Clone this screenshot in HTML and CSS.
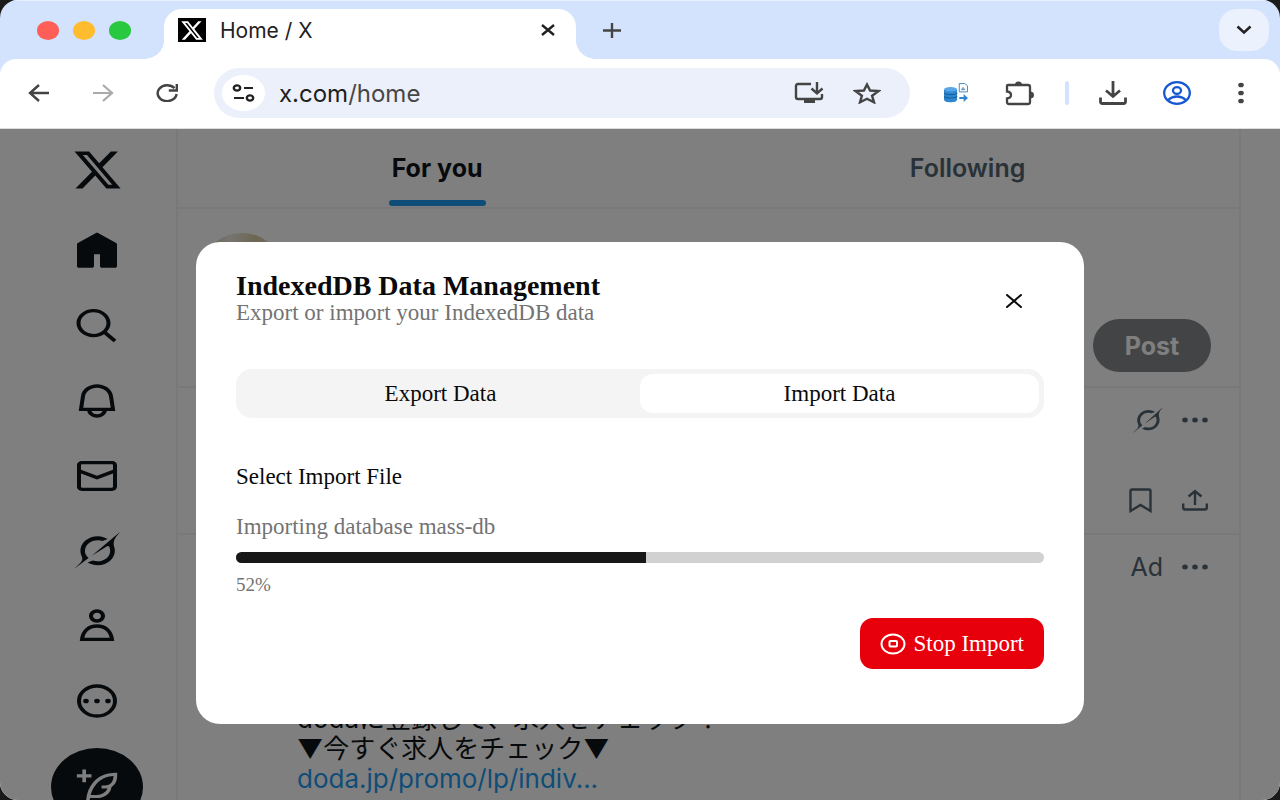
FILE: index.html
```html
<!DOCTYPE html>
<html lang="en">
<head>
<meta charset="utf-8">
<title>Home / X</title>
<link rel="stylesheet" href="styles.css">
</head>
<body>
<svg class="defs" aria-hidden="true">
  <symbol id="x-logo" viewBox="1 2 22 20" preserveAspectRatio="none"><path d="M18.244 2.25h3.308l-7.227 8.26 8.502 11.24H16.17l-5.214-6.817L4.99 21.75H1.68l7.73-8.835L1.254 2.25H8.08l4.713 6.231zm-1.161 17.52h1.833L7.084 4.126H5.117z"/></symbol>
  <symbol id="grok" viewBox="0 0 33 32" preserveAspectRatio="none"><path d="M12.745 20.54l10.97-8.19c.539-.4 1.307-.244 1.564.38 1.349 3.288.746 7.241-1.938 9.955-2.683 2.714-6.417 3.31-9.83 1.954l-3.728 1.745c5.347 3.697 11.84 2.782 15.898-1.324 3.219-3.255 4.216-7.692 3.284-11.693l.008.009c-1.351-5.878.332-8.227 3.782-13.031L33 0l-4.54 4.59v-.014L12.743 20.544m-2.263 1.987c-3.837-3.707-3.175-9.446.1-12.755 2.42-2.449 6.388-3.448 9.852-1.979l3.72-1.737c-.67-.49-1.53-1.017-2.515-1.387-4.455-1.854-9.789-.931-13.41 2.728-3.483 3.523-4.579 8.94-2.697 13.561 1.405 3.454-.899 5.898-3.22 8.364C1.49 30.2.666 31.074 0 32l10.478-9.466"/></symbol>
  <symbol id="dots" viewBox="0 0 26 6" preserveAspectRatio="none"><ellipse cx="3" cy="3" rx="2.8" ry="2.5"/><ellipse cx="13" cy="3" rx="2.8" ry="2.5"/><ellipse cx="23" cy="3" rx="2.8" ry="2.5"/></symbol>
</svg>
<div class="window">
  <header class="tabstrip">
    <div class="lights"><span class="light red"></span><span class="light yellow"></span><span class="light green"></span></div>
    <div class="tab">
      <span class="favicon"><svg width="22" height="19" fill="#fff"><use href="#x-logo"/></svg></span>
      <span class="tab-title">Home / X</span>
      <button class="plain" aria-label="Close tab"><svg width="14" height="12" viewBox="0 0 14 12" class="line dark"><path d="M1 1l12 10M13 1L1 11" stroke-width="2.4"/></svg></button>
    </div>
    <button class="plain new-tab" aria-label="New tab"><svg width="18" height="15" viewBox="0 0 18 15" class="line"><path d="M0 7.5h18M9 0v15" stroke-width="2.4"/></svg></button>
    <button class="plain tab-search" aria-label="Search tabs"><svg width="16" height="10" viewBox="0 0 16 10" class="line dark"><path d="M1.5 1.5L8 7.500l6.500-6" stroke-width="2.500"/></svg></button>
  </header>

  <nav class="toolbar" aria-label="Browser">
    <button class="plain tool" aria-label="Back"><svg width="22" height="18" viewBox="0 0 22 18" class="line"><path d="M11 1L2 9l9 8M2 9h19" stroke-width="2.4"/></svg></button>
    <button class="plain tool off" aria-label="Forward" disabled><svg width="22" height="18" viewBox="0 0 22 18" class="line"><path d="M11 1l9 8-9 8M20 9H1" stroke-width="2.2"/></svg></button>
    <button class="plain tool" aria-label="Reload"><svg width="22" height="18" viewBox="0 0 22 18" class="line"><path d="M20.600 10A9.500 7.900 0 1 1 18.500 4.200M20.800 0v6.500h-8" stroke-width="2.4"/></svg></button>
    <div class="omnibox">
      <button class="plain site-info" aria-label="Site information"><svg width="23" height="18" viewBox="0 0 23 18" class="line dark"><ellipse cx="5" cy="4" rx="3.200" ry="2.600" stroke-width="2.400"/><path d="M12 4h9M2 14h10" stroke-width="2.200"/><ellipse cx="18" cy="14" rx="3.200" ry="2.600" stroke-width="2.400"/></svg></button>
      <span class="url">x.com<span class="path">/home</span></span>
      <button class="plain" aria-label="Install X"><svg width="30" height="22" viewBox="0 0 30 22" class="line"><path d="M17 2H4Q2 2 2 4v11q0 2 2 2h22q2 0 2-2v-3" stroke-width="2.400"/><path d="M10 18h11v3H10z" fill="#444" stroke="none"/><path d="M23 0v11M17.500 6.500L23 11.500l5.500-5" stroke-width="2.400"/></svg></button>
      <button class="plain star" aria-label="Bookmark this tab"><svg width="28" height="22" viewBox="0 0 28 22" class="line"><path d="M14 2.500l3.100 6 8.300.6-6.300 4.600 1.900 6.600-7-3.500-7 3.500 1.900-6.600L2.600 9.100l8.300-.6z" stroke-width="2.400"/></svg></button>
    </div>
    <button class="plain tool" aria-label="IndexedDB extension"><svg width="24" height="20" viewBox="0 0 22 18" preserveAspectRatio="none"><path d="M0 6v9c0 3 12 3 12 0V6z" fill="#2f86cf"/><ellipse cx="6" cy="5.700" rx="6" ry="2" fill="#58a6e6"/><path d="M0 9c1 2 11 2 12 0M0 12c1 2 11 2 12 0" fill="none" stroke="#17609f"/><path d="M14 12.500h4v-2.500l4 3.500-4 3.500V14.500h-4z" fill="#2f86cf"/><path d="M14 .5h5l2.500 2v5.500H14zM16 6l1.500-2 1.500 2z" fill="#fff" stroke="#4b8bc0" stroke-width=".9"/></svg></button>
    <button class="plain tool" aria-label="Extensions"><svg width="30" height="25" viewBox="0 0 30 25" class="line"><path d="M3 4h20q2 0 2 2v15q0 2-2 2H4q-2 0-2-2v-3.500q4-.500 4-3.500t-4-3.500V5q0-1 1-1z" stroke-width="2.300"/><path d="M10 4q0-3.500 3.500-3.500T17 4zM25 10.500q4 0 4 3.500t-4 3.500z" fill="#444" stroke="none"/></svg></button>
    <span class="divider"></span>
    <button class="plain tool" aria-label="Downloads"><svg width="28" height="24" viewBox="0 0 28 24" class="line"><path d="M14 0v15M7 9.500l7 6 7-6" stroke-width="2.800"/><path d="M1.500 16.500v4q0 2 2 2h21q2 0 2-2v-4" stroke-width="2.800"/></svg></button>
    <button class="plain tool" aria-label="Profile"><svg width="28" height="24" viewBox="0 0 28 24" fill="none" stroke="#1558d0" stroke-width="2.300"><ellipse cx="14" cy="12" rx="12.800" ry="10.800"/><ellipse cx="14" cy="9.500" rx="4" ry="3.400"/><path d="M5 19q4-3.500 9-3.500t9 3.500"/></svg></button>
    <button class="plain tool" aria-label="Menu"><svg width="6" height="22" viewBox="0 0 6 22" fill="#444"><ellipse cx="3" cy="3" rx="2.800" ry="2.300"/><ellipse cx="3" cy="11" rx="2.800" ry="2.300"/><ellipse cx="3" cy="19" rx="2.800" ry="2.300"/></svg></button>
  </nav>

  <div class="page">
    <nav class="sidebar" aria-label="Primary">
      <a href="#" class="brand" aria-label="X"><svg width="47" height="38"><use href="#x-logo"/></svg></a>
      <a href="#" aria-label="Home"><svg class="nav-icon" viewBox="0 0 24 24" preserveAspectRatio="none"><path d="M21.591 7.146L12.520 1.157c-.316-.21-.724-.21-1.040 0l-9.071 5.990c-.26.173-.409.456-.409.757v13.183c0 .502.418.913.929.913h6.638c.511 0 .929-.41.929-.913v-7.075h3.008v7.075c0 .502.418.913.929.913h6.639c.510 0 .928-.41.928-.913V7.904c0-.301-.158-.584-.408-.758z"/></svg></a>
      <a href="#" aria-label="Search"><svg class="nav-icon" viewBox="0 0 24 24" preserveAspectRatio="none"><path d="M10.250 3.750c-3.590 0-6.500 2.910-6.500 6.500s2.910 6.500 6.500 6.500c1.795 0 3.419-.726 4.596-1.904 1.178-1.177 1.904-2.801 1.904-4.596 0-3.590-2.910-6.500-6.500-6.500zm-8.500 6.500c0-4.694 3.806-8.500 8.500-8.500s8.500 3.806 8.500 8.500c0 1.986-.682 3.815-1.824 5.262l4.781 4.781-1.414 1.414-4.781-4.781c-1.447 1.142-3.276 1.824-5.262 1.824-4.694 0-8.500-3.806-8.500-8.500z"/></svg></a>
      <a href="#" aria-label="Notifications"><svg class="nav-icon" viewBox="0 0 24 24" preserveAspectRatio="none"><path d="M19.993 9.042C19.480 5.017 16.054 2 11.996 2s-7.490 3.021-7.999 7.051L2.866 18H7.100c.463 2.282 2.481 4 4.900 4s4.437-1.718 4.900-4h4.236l-1.143-8.958zM12 20c-1.306 0-2.417-.835-2.829-2h5.658c-.412 1.165-1.523 2-2.829 2zm-6.866-4l.847-6.698C6.364 6.272 8.941 4 11.996 4s5.627 2.268 6.013 5.295L18.864 16H5.134z"/></svg></a>
      <a href="#" aria-label="Messages"><svg class="nav-icon" viewBox="0 0 24 24" preserveAspectRatio="none"><path d="M1.998 5.500c0-1.381 1.119-2.500 2.500-2.500h15c1.381 0 2.500 1.119 2.500 2.500v13c0 1.381-1.119 2.500-2.500 2.500h-15c-1.381 0-2.500-1.119-2.500-2.500v-13zm2.500-.5c-.276 0-.5.224-.5.5v2.764l8 3.638 8-3.636V5.500c0-.276-.224-.5-.5-.5h-15zm15.500 5.463l-8 3.636-8-3.638V18.500c0 .276.224.5.5.5h15c.276 0 .5-.224.5-.5v-8.037z"/></svg></a>
      <a href="#" aria-label="Grok"><svg width="46" height="37"><use href="#grok"/></svg></a>
      <a href="#" aria-label="Profile page"><svg class="nav-icon" viewBox="0 0 24 24" preserveAspectRatio="none"><path d="M5.651 19h12.698c-.337-1.800-1.023-3.210-1.945-4.190C15.318 13.650 13.838 13 12 13s-3.317.650-4.404 1.810c-.922.980-1.608 2.390-1.945 4.190zm.486-5.560C7.627 11.850 9.648 11 12 11s4.373.850 5.863 2.440c1.477 1.580 2.366 3.800 2.632 6.460l.11 1.100H3.395l.11-1.100c.266-2.660 1.155-4.880 2.632-6.460zM12 4c-1.105 0-2 .9-2 2s.895 2 2 2 2-.9 2-2-.895-2-2-2zM8 6c0-2.210 1.791-4 4-4s4 1.790 4 4-1.791 4-4 4-4-1.790-4-4z"/></svg></a>
      <a href="#" aria-label="More"><svg class="nav-icon" viewBox="0 0 24 24" preserveAspectRatio="none"><circle cx="12" cy="12" r="9" fill="none" stroke="#0f1419" stroke-width="2"/><circle cx="6.500" cy="12" r="1.400"/><circle cx="12" cy="12" r="1.400"/><circle cx="17.500" cy="12" r="1.400"/></svg></a>
      <button class="plain compose" aria-label="Compose post"><svg width="44" height="38" viewBox="0 0 24 24" preserveAspectRatio="none" fill="#fff"><path d="M23 3c-6.620-.1-10.380 2.421-13.050 6.030C7.290 12.610 6 17.331 6 22h2c0-1.007.070-2.012.190-3H12c4.100 0 7.480-3.082 7.940-7.054C22.790 10.147 23.170 6.359 23 3zm-7 8h-1.500v2H16c.630-.016 1.200-.08 1.720-.188C16.950 15.240 14.680 17 12 17H8.550c.570-2.512 1.570-4.851 3-6.780 2.160-2.912 5.290-4.911 9.450-5.187C20.950 8.079 19.900 11 16 11zM4 9V6H1V4h3V1h2v3h3v2H6v3H4z"/></svg></button>
    </nav>

    <main class="feed">
      <div class="feed-tabs">
        <a href="#" class="feed-tab current"><span>For you</span></a>
        <a href="#" class="feed-tab"><span>Following</span></a>
      </div>
      <section class="composer">
        <span class="avatar"></span>
        <button class="plain post">Post</button>
      </section>
      <article class="item first">
        <div class="row"><svg width="30" height="26"><use href="#grok"/></svg><svg width="26" height="6"><use href="#dots"/></svg></div>
        <div class="row">
          <svg class="bookmark" width="23" height="25" viewBox="0 0 23 25"><path d="M1.500 23V3q0-1.500 1.500-1.500h17q1.500 0 1.500 1.500v20l-10-6z" fill="none" stroke="#536471" stroke-width="2.400"/></svg>
          <svg width="26" height="22" viewBox="0 0 26 22"><path d="M13 16V2M6.500 7.500L13 2l6.500 5.500M1.200 14.500v4q0 2 2 2h19.600q2 0 2-2v-4" fill="none" stroke="#536471" stroke-width="2.400"/></svg>
        </div>
      </article>
      <article class="item ad">
        <div class="row"><span>Ad</span><svg width="26" height="6"><use href="#dots"/></svg></div>
        <p class="ad-text">dodaに登録して、求人をチェック！<br>▼今すぐ求人をチェック▼<br><a href="#">doda.jp/promo/lp/indiv...</a></p>
      </article>
    </main>

    <div class="overlay">
      <section class="dialog" role="dialog" aria-modal="true" aria-labelledby="dialog-title">
        <header class="dialog-head">
          <div>
            <h1 id="dialog-title">IndexedDB Data Management</h1>
            <p class="muted">Export or import your IndexedDB data</p>
          </div>
          <button class="plain close" aria-label="Close dialog"><svg width="16" height="14" viewBox="0 0 16 14" class="line black"><path d="M1 1l14 12M15 1L1 13" stroke-width="2" stroke-linecap="round"/></svg></button>
        </header>
        <div class="segments" role="tablist">
          <button class="plain segment" role="tab" aria-selected="false">Export Data</button>
          <button class="plain segment active" role="tab" aria-selected="true">Import Data</button>
        </div>
        <h2>Select Import File</h2>
        <p class="muted" id="status">Importing database mass-db</p>
        <div class="progress" role="progressbar" aria-labelledby="status" aria-valuenow="52" aria-valuemin="0" aria-valuemax="100"><div class="bar" style="width:50.8%"></div></div>
        <p class="percent">52%</p>
        <div class="actions">
          <button class="plain stop"><svg width="26" height="22" viewBox="0 0 26 22" fill="none" stroke="#fff" stroke-width="2"><ellipse cx="13" cy="11" rx="11.500" ry="9.500"/><rect x="9.500" y="8" width="7.500" height="5.500" rx="1"/></svg>Stop Import</button>
        </div>
      </section>
    </div>
  </div>
</div>
</body>
</html>
```
FILE: styles.css
```css
* { box-sizing: border-box; }
html, body { margin: 0; height: 100%; }
body { background: #1a1a1a; overflow: hidden; font-family: Inter, "Noto Sans CJK JP", sans-serif; }
h1, h2, p { margin: 0; }
svg { display: block; flex: none; }
.defs { position: absolute; width: 0; height: 0; }
.plain { border: 0; padding: 0; background: none; font: inherit; color: inherit; cursor: pointer; display: flex; align-items: center; justify-content: center; }
.line { fill: none; stroke: #444; }
.dark { stroke: #222; }
.black { stroke: #0a0a0a; }

.window { height: 100vh; display: flex; flex-direction: column; overflow: hidden; border-radius: 18px; background: #d3e3fd; }

/* Tab strip */
.tabstrip { display: flex; height: 59px; flex: none; padding-right: 11px; border-top: 1px solid #e6effd; }
.lights { display: flex; gap: 14px; align-items: center; padding-left: 37px; width: 164px; }
.light { width: 22px; height: 19px; border-radius: 50%; }
.red { background: #ff5f57; }
.yellow { background: #febc2e; }
.green { background: #28c840; }
.tab { position: relative; display: flex; align-items: center; width: 412px; margin-top: 8px; padding: 0 21px 8px 14px; background: #fff; border-radius: 18px 18px 0 0; }
.tab::before, .tab::after { content: ""; position: absolute; bottom: 0; width: 20px; height: 18px; }
.tab::before { right: 100%; background: radial-gradient(ellipse 20px 18px at 0 0, #d3e3fd 98%, #fff); }
.tab::after { left: 100%; background: radial-gradient(ellipse 20px 18px at 100% 0, #d3e3fd 98%, #fff); }
.favicon { display: flex; align-items: center; justify-content: center; width: 28px; height: 24px; background: #000; }
.tab-title { flex: 1; margin-left: 14px; font-size: 21px; color: #222; }
.new-tab { width: 72px; }
.tab-search { width: 50px; height: 42px; margin: 8px 0 0 auto; border-radius: 18px; background: #ebf1fd; }

/* Toolbar */
.toolbar { display: flex; align-items: center; flex: none; height: 69px; padding: 0 7px 1px; background: #fff; border-radius: 16px 16px 0 0; }
.tool { width: 64px; height: 48px; }
.off { opacity: .45; }
.omnibox { flex: 1; display: flex; align-items: center; height: 50px; margin: 0 14px 0 15px; padding: 0 29px 0 8px; border-radius: 25px; background: #ebf0fa; }
.site-info { width: 43px; height: 36px; border-radius: 50%; background: #fff; }
.url { flex: 1; margin-left: 14px; font-size: 24px; color: #1f1f1f; }
.path { color: #474747; }
.star { margin-left: 29px; }
.divider { width: 4px; height: 24px; margin: 0 12px 0 13px; border-radius: 2px; background: #d3e3fd; }

/* Page */
.page { position: relative; flex: 1; min-height: 0; display: flex; overflow: hidden; background: #fff; border-top: 1px solid #ddd; color: #0f1419; }
.sidebar { width: 176px; flex: none; display: flex; flex-direction: column; align-items: center; padding: 3px 0 0 18px; }
.sidebar a { flex: none; height: 75px; display: flex; align-items: center; fill: #0f1419; }
.sidebar .brand { height: 81px; padding-bottom: 6px; }
.nav-icon { width: 48px; height: 40px; }
.compose { flex: none; width: 92px; height: 78px; margin-top: 10px; border-radius: 50%; background: #0f1419; }
.feed { flex: 1; margin-right: 39px; border: solid #eff3f4; border-width: 0 2px; }
.feed-tabs { display: flex; height: 80px; border-bottom: 2px solid #eff3f4; }
.feed-tab { flex: 1 1 auto; display: flex; justify-content: center; color: #536471; font-size: 25px; line-height: 30px; font-weight: 600; text-decoration: none; }
.feed-tab span { display: flex; flex-direction: column; justify-content: space-between; padding: 24px 0 1px; }
.current { color: #0f1419; font-weight: 700; }
.current span::after { content: ""; height: 6px; margin: 0 -3px; border-radius: 3px; background: #1d9bf0; }
.composer { display: flex; justify-content: space-between; height: 179px; padding: 24px 28px 14px 27px; border-bottom: 2px solid #eff3f4; }
.avatar { width: 74px; height: 62px; border-radius: 50%; background: radial-gradient(circle at 70% 10%, #d9cba0, #ece9df 35%, #d0c49a 70%); }
.post { align-self: flex-end; width: 118px; height: 53px; border-radius: 27px; background: #87898c; color: #fff; font-size: 25px; font-weight: 700; }
.item { padding: 19px 31px 0 119px; fill: #536471; color: #536471; border-bottom: 2px solid #eff3f4; }
.first { height: 147px; }
.row { display: flex; justify-content: flex-end; align-items: center; gap: 19px; height: 26px; font-size: 25px; }
.row + .row { margin-top: 54px; gap: 30px; }
.ad-text { margin-top: 124px; padding-bottom: 60px; color: #0f1419; font-size: 26px; line-height: 30px; }
.ad-text a { color: #1d9bf0; text-decoration: none; }

/* Dialog */
.overlay { position: absolute; inset: 0; display: flex; justify-content: center; align-items: flex-start; padding: 113px 16px 0; background: rgba(0, 0, 0, .5); }
.dialog { width: 100%; max-width: 888px; padding: 30px 40px 55px; border-radius: 24px; background: #fff; color: #0a0a0a; font-family: "Liberation Serif", serif; font-size: 23px; line-height: 26px; }
.dialog-head { display: flex; justify-content: space-between; }
h1 { font-size: 28px; line-height: 28px; font-weight: 700; }
.muted { color: #737373; }
.close { width: 60px; height: 58px; }
.segments { display: flex; margin-top: 39px; padding: 5px; border-radius: 16px; background: #f4f4f4; }
.segment { flex: 1; height: 39px; border-radius: 13px; }
.active { background: #fff; }
h2 { margin: 46px 0 24px; font-size: 23px; font-weight: 400; }
.progress { height: 11px; margin: 12px 0 9px; border-radius: 6px; background: #d1d1d1; overflow: hidden; }
.bar { height: 100%; background: #171717; }
.percent { font-size: 19px; color: #737373; }
.actions { display: flex; justify-content: flex-end; margin-top: 20px; }
.stop { gap: 7px; height: 51px; padding: 0 20px; border-radius: 13px; background: #e7000b; color: #fff; }
```
